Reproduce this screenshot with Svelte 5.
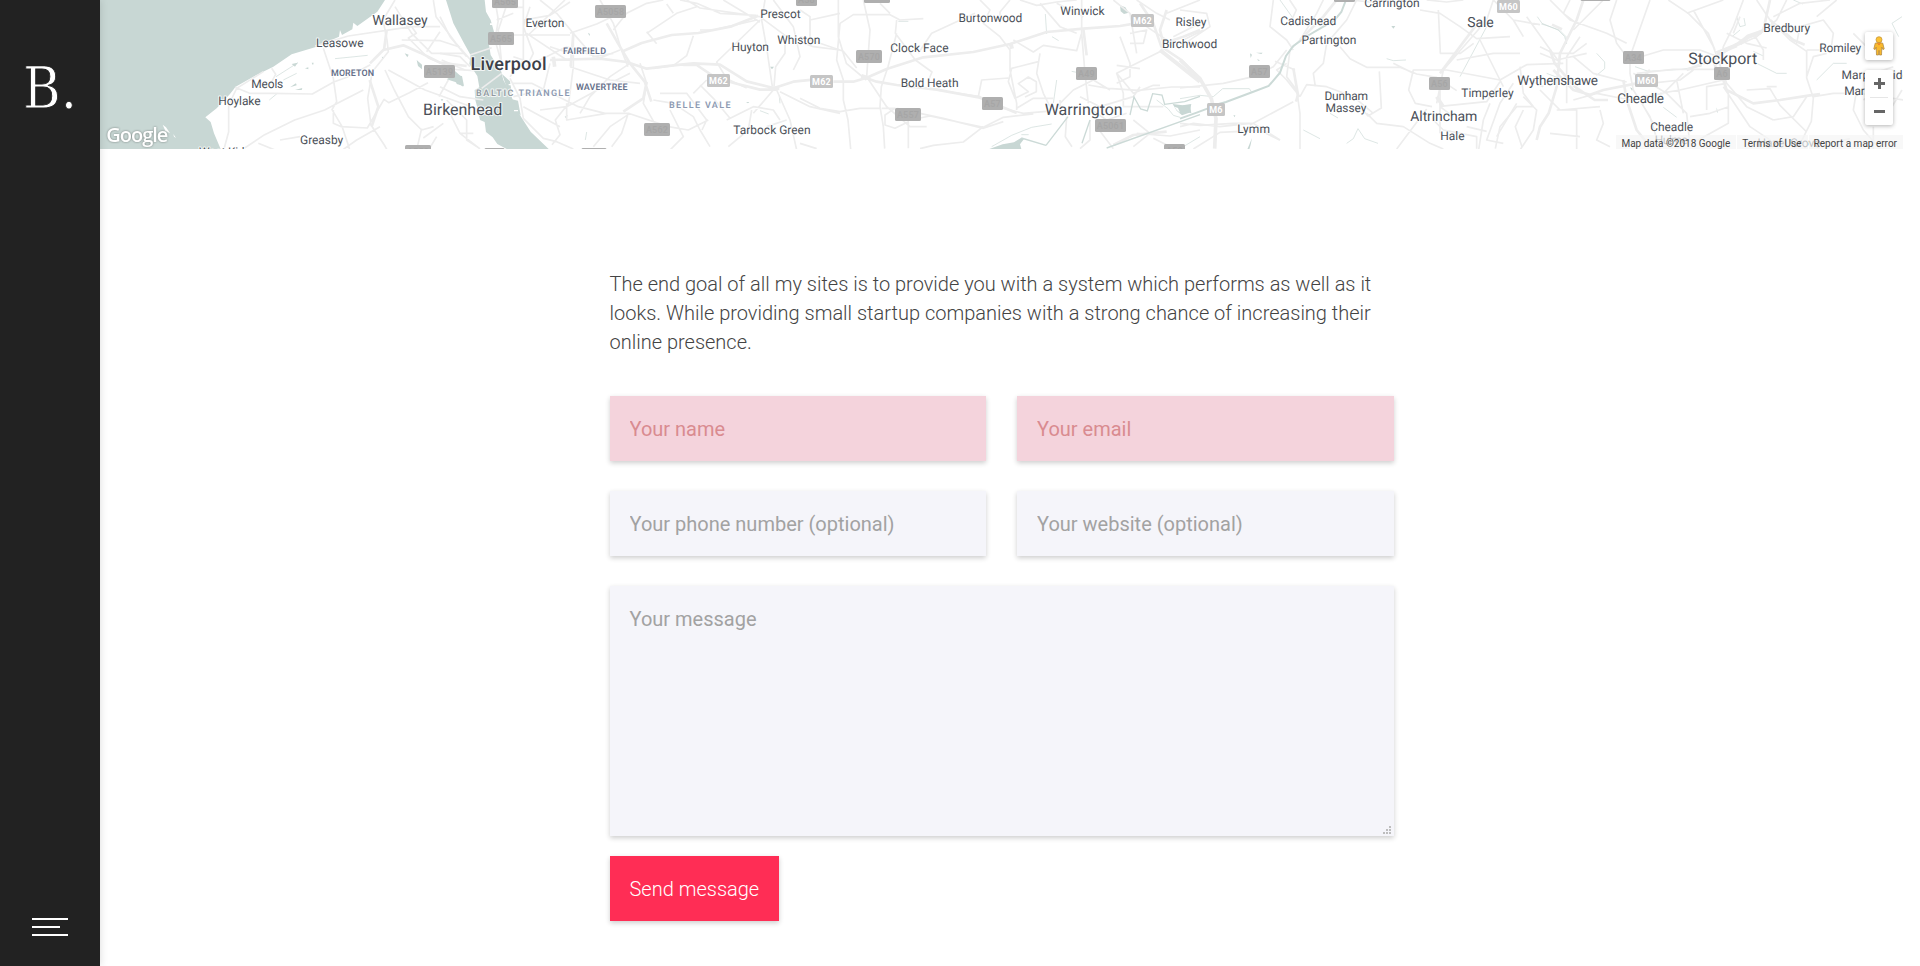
<script>
  // Road and water geometry is stored per map tile, at three units per pixel.
  const tiles = [
    {
      x: 0,
      water: [
        'M300 0H1155L1132 35 1072 78 1060 68 1057 88 1026 105 1020 90 1017 110 945 142 875 163 820 200 760 230 707 260 690 282 650 325 616 352 632 366 642 400 662 447H300Z',
        'M875 192l18-4-8 12zM915 205l10-3v6zM935 188l6 0-2 8zM870 262l18-12 2 6zM885 270l22-6-2 6zM1214 160l12 4-4 8zM1145 170l8 2-4 6zM1322 298l8 0-4 6zM1250 180l16 14 0 14-12-10z',
        'M1364 212l18 16 8 32-24-14-26-8 12-8z'
      ],
      land: ['M488 374l10 8 12 18-14-8zM520 402l8 12-6-4z'],
      thin: ['M1005 176l60-6 38-4M828 230l66-42M808 300l24-20M850 240l40-20'],
      roads: [
        [5, 'M1185 0l-36 60 12 60 4 35-48 60-14 80 10 80 40 60 40 72M945 138l100-30 190-28 85 0M970 145l30 90 10 70-14 24 30 50 20 60 14 50M815 205l12 18-16 30M705 262l44 18 68 0 120 2 64-36 40-14 70-38M1090 270l-66 34-50 26-90 30-90 44-60 40M790 215l-80 50-24 50 0 80-14 52M775 430l60 24M900 410l-60 10M1000 330l0 40 24 10 78 4 50-86 14 10 62-30 56-30M1165 210l110 60 110 40 55 20M1155 210l28 60 42 80 40 40 36-10M1235 80l14 20-24 14 60 60 80 34 60 4M1205 120l116 2 60 20M1185 20l50 80 60 60 100 0M1300 0l8 50 60 80 44 50M1140 380l-70 40-40 28M1265 385l-14 60M1330 370l-60 44M1310 410l-22 36M1345 240l-28 50M1320 95l-40 60'],
        [8, 'M1110 190l40-40 60-14 50 22 60 30 80 10M1160 90l-8 60M1115 380l20-60-26-80']
      ]
    },
    {
      x: 440,
      water: [
        'M18 0H134L138 35 152 60 162 95 146 128 152 165 184 215 190 240 208 272 226 320 244 352 272 395 326 447H200L172 432 158 412 138 396 134 366 120 360 114 330 106 300 104 270 118 262 112 228 88 192 92 166 72 130 40 70Z',
        'M44 226l22 2 6 30-22-6zM444 98l6 4-2 6zM374 350l10-4-6 8zM990 200l12 0-6 8zM918 306l10 0-4 4zM186 222l24 22 6 40-14-16zM210 296l24 6 8 44-10-8z'
      ],
      land: ['M142 36h14v5h-14zM150 50h14v4h-14zM150 70h10v5h-10zM206 252h10v4h-10zM222 330h12v4h-12z'],
      thin: ['M436 420l4-24M960 332l26 10M1018 290l2 20'],
      roads: [
        [5, 'M165 0l10 60-10 60 20 70M205 0l-30 90 10 100M250 0v180l-40 50M270 20l-20 60 30 80-20 40M160 22h90M170 60l50-20M300 0l50 40 50 60 0 100-14 110-40 50 14 44-24 30M250 60l80-14 60-40M375 0l-110 105M260 100l120 80M170 105l220 0M220 170l60 20 100-50 100 34 60-24M390 100l80-28 64-30M400 100l60 70 60-10M480 0l40 70 24 80 20 50M520 90l40-50 60-30 50-10M620 100l90-60 60-20M620 95l30 36M700 40l-20-28M720 0l50 10 70 30 110 6M740 0l40 24 180 26M850 0l60 36 50 30M975 0l-10 60 16 90 16 110M960 60l-130 126 30 50 60 28M1035 120l0 40-28 40-5 60M1000 0l60 80 20 90-20 40M1200 150l-80-10-80-30-80-60M1110 90l0-30 90-20M780 90l40 0 130-30M640 205l60-8 40-30 20-60M600 190l20 60-10 60 34 60M570 190l-60 40-60 60-30 50M390 200l120 40 90 10M330 140l60 20M330 190l-20 80-90 20M215 250l60 0 140 70 80 20 70 0 120 40 60 10 60-30M210 235l30 60 10 60 60 60 40 10 50 22M250 320l110 60M300 330l80-10 110-60 80-40M380 310l0 50 120-20M570 340l-60 40-50 60M565 340l-20 60-30 40M640 300l60 10 60 40 20 40 30 50M660 280l80 0 60 80-14 30M760 280l40-40M690 330l40 80-40 40M860 360l80-40 60 10 20 30M870 355l-50-60-40-40M935 330l-10 60-60 50M1000 270l-60 70M1010 270l40 90 20 90M1040 360l-60 20M1020 275l90 45 90 20M0 160l60 10 30 30M0 260l60 30 70 10M0 320l30 20 30 60 60 47M20 300l60 60 0 60 30 20M90 165l65-22M75 210l-70-30M60 400l40 0M125 265l60-45M0 50l30 60 50 60'],
        [8, 'M330 180l150-4 80 10 60 20 80-10 60-6 80 4 80 50 80 20M545 155l60-26 90-24 80-6 100-20 80-32M500 70l34 60 36 60 44 55 20 60M620 245l-10 50-60 40M730 195l40 0 60 40 60 16 70 18 50 0M1000 265l60-20 60-6M400 100l-8 100'],
        [11, 'M988 265h30M340 170l4 30']
      ]
    },
    {
      x: 800,
      water: [
        'M960 16l16 6 10 16-14 4-10-8zM568 447l40-14 34-6 22-14 8 4-12 16 4 14zM1118 312l30 4 26-4-6 26-22 8-16-14z'
      ],
      land: ['M1124 320l10 4 6 14-10-8z'],
      thin: ['M736 42l4 60M756 110l20 12M770 240l-10 70M815 214l20 4M575 440l60-34 60-24 60-10M664 404l22 0M1200 410l-60 36M325 64l-30 0M1070 300l34 26 16 20 20 6'],
      green: ['M990 345l12-54 20 36 20 6 16-52 28 4 8 28 60-8 46-16M664 414l74 22M738 436l66-86M920 444l280-100M870 360l-24 70'],
      roads: [
        [5, 'M115 0l0 110 24 80 60 50M120 70l40-26 110 0 30 16 70-4M120 70l-10 110 20 60 0 60 14 60 8 87M190 0l20 90-10 140 60 90 70 60 50 0M270 40l-30-30M290 60l-4 40 60 80 50 36-10 24M290 100l-26 100-20 60-4 60 10 60 4 66M525 40l-130 60-40 60M540 0l30 30-20 40 50 40 30 40 0 60 20 100 0 20M600 70l0-34 30-36M660 0l50 16 60-10 60-6M770 10l80 40M720 10l60 70 50 20M640 120l60 36 30-20 100 16 14-50M845 0l0 100 10 120 10 90M940 0l50 40 20 120M960 110l30 80 0 40-40 20M990 100l50-10-10 40-40 0M1040 80l60 40M1010 0l60 40 40 20M1100 40l100-40M1120 110l80-40M1090 150l-80 40-60 30 50 60 60-24 20 0M1020 206l-70-10M950 220l20 60 0 40 120 0M865 255l60 10 90 6 100-10 85 0M780 310l40-40 60-30 50 30M780 300l0 40M840 290l60 30 100-30 20-30M720 160l-10 60 20 60 20 40M715 185l-80 20-10 40 20 50 40-20-30-24 30-20 24 14 0 30-34 16M650 325l50-30 60 0M535 290l10-50 80-6M410 270l130 20 50 30 80 20 70-6M245 325l40 0-30 20 0 30 30 10 40-20 0 80M330 360l60-12 160 34 60-30 90-10M290 325l140 30 120 30 60-20M550 380l-60 46-90 10-40 10M0 295l60 30 60 10 60-10 60 0M0 430l50 16M0 110l60 20 70 24 40 50M0 30l30 20 0 70M800 350l-4 60 20 30M870 360l0 60-30 26M890 380l50 66M1000 360l50 40-50 40M1010 400l100 8 90-18M1060 415l60 30M860 320l60 40 60-20'],
        [8, 'M100 245l60 0 40-12 60-26 110-35 150-16 110-24 110-36 110-10 110-8 60-10M200 235l30 10 60 10 120 14 130 24 110 46M1020 10l40 60 24 70 60 40 60 60M1100 30l-20 60 10 40 60-20 50-20M940 435l60-30 100-10M850 86l10 80'],
        [12, 'M184 228l26 8M632 130l4 16M1080 150l120 95']
      ]
    },
    {
      x: 1180,
      water: [
        'M0 318l30-4 4 26-16-4zM210 160l6 4-4 10zM634 78l12 0-6 8zM160 346l6 0-2 6zM216 414l-14 34h6l4-14zM228 158l20 0-4 4zM232 176l8 6-6 0z'
      ],
      canal: [
        'M498 0l-14 36-22 26-32 18-48 28-42 30-22 30-18 50-34 40-48 18-80 30-30 8M108 316l-58 22-50 18'
      ],
      thin: ['M0 296l60-10 40 4 28-24 80 0 8 12M620 176l20 6 38-2M1072 50l14 20 48 20 20 20 6 22M840 230l80-150M300 0l40 56M370 390l50 26M500 430l20-14 14-30 20 30 40 14M450 340l24 14'],
      roads: [
        [5, 'M0 30l80 10 10 40-90 60M10 120l60-30M280 0l-10 80 50 40 20 30M335 60l14-30-20-30M430 0l-20 40-50 80-30 30-10 80 30 40 10 70 0 140M320 150l-40 50-60 30-90 20-130 14M285 184l60 26M320 190l-30 20 30 30 40 50M360 290l20-36 60 6 80 30 60 50M530 0l-30 60-60 70-10 60-30 30 6 40M480 140l30 36 50 26 100 0 50 20 60 10 60 40M540 320l24 28 40-24-6-110M560 340l30 30 80 10 80 50 40 17M650 447l90-120M775 30l6 130 60 0 40-30M720 30l60 10 60 40 50 36 100-6M940 0l-20 60-130 150-20 100M900 120l60 120 10 20M960 240l-160-30-100 0-14 60 20 40 50 10M960 245l-40 60-140 14M780 240l0 80 40 30M640 190l60 30M780 320l0 80M930 310l-20 50-14 90M960 240l80-46 110-4M1020 200l10 80 30 40M1030 230l60 30M1040 50l50 70 50 70M940 0l60 60 30 50M1000 60l80 14M1000 250l-40 60-40 110 50 10M1010 310l-60 100M1030 330l-24 50 20 60M0 370l60 6 100-6 60 0 80 50M0 380l40-10 80 10 90-10M210 375l130-70M40 447l80-50 120-6 60 30'],
        [5, 'M510 0l60 6 60-6M740 0l60 6 50-6M830 180l110-20 80 0M1060 320l-50 0-50 60-14 66M1030 290l40 40-10 60-40 60M860 380l60 14M760 360l30 30 100 20 0 36'],
        [8, 'M340 205l14 80-6 20M900 60l-120 160M360 120l70-70 40-50'],
        [11, 'M0 180l60 56 34 60 14 60-4 90M770 290l20 30']
      ]
    },
    {
      x: 1540,
      water: ['M270 262l10 4-4 6zM530 322l4 16-4-2z'],
      thin: ['M4 72l14 4 40 14 20 20 2 20M170 160l24 26 0 20-24 20M285 200l40 14 100-6 60-10M590 50l10 30 16-4-4-22M576 110l24-20M640 154l30 14M1086 50l-30 20 20 40M650 190l60 30 30 0M830 240l50-50 40 0M370 322l40 30M20 220l36 14M760 0l28 12'],
      roads: [
        [5, 'M30 0l60 60 110 40 60 30M230 0l-20 60 20 70 30 40M330 0l-60 170 0 50 10 50 50 80 30 97M90 0l-20 40 40 30M385 0l60 40 60 60 20 50M550 0l-110 40M610 0l-30 80-30 60-10 60M460 30l60 110 40 110 60 70 80 40M650 0l40 60 60 60 50 34 0 80 20 60-6 70-30 60M740 0l-30 60-60 50-110 50M700 50l80-40 90-10M800 150l40 0M770 130l10-50 70-20 30 40-6 40M830 50l60-50M560 100l60 30 60 14M270 180l100-30 110 0 80 30M280 220l100 60 60 60 10 100M290 220l110-12 130 0M430 220l-60 60-60 10M330 250l90-10 40-30M410 240l20 100M360 280l60-10 130-30M500 330l0-70 60-10M450 350l60-10 56-20M565 270l0 100-90 50-110 0M300 300l40 70 70 20M550 260l80 120 90 60M620 270l70-4 30 50 80 80M680 260l30 0M820 290l60-10 80 0 130 20M800 230l20-60 40-10M700 360l60-10 40-60M640 100l30 50 0 30M950 270l-10 60 30 60 50 57M1000 380l0 67M970 300l40-30M1050 330l36-60M870 430l60-14M940 100l60 60M1060 200l-60 20M600 50l-20 50M100 170l60 50 100 26M0 140l40 20 60 0 40-30M0 160l50 20 90-20M120 110l-40 60 0 70 0 70M0 270l60 60 120-10M50 330l60 0 0 117M30 400l90 10M180 330l10 40-20 50 40 20M100 300l70-20 100 20M190 0l-90 90'],
        [8, 'M130 0l-20 60-50 100-10 100-24 80-26 40-10 40M40 210l60 60 50 14 40-14 100-20 40-40M250 240l10 60 30 90 40 50M30 150l14 40 60 70 60 40 40 0M540 210l20 60 80 40 80-10 90-14 30-4M530 170l80-50 60-30 20-90M690 60l70 60 34 14M440 210l100-40M520 180l16 50'],
        [13, 'M600 130l24-20 40-14M530 160l60-24'],
        [8, 'M36 74l30 14']
      ]
    }
  ];

  const ink = '#4b5058';
  const suburb = '#66708a';
  // [text, x, baseline, width, size, weight, colour]
  const places = [
    ['Wallasey', 372.3, 25, 55.3, 14], ['Leasowe', 316, 47.3, 47.5, 12], ['Meols', 251.3, 88, 32, 12],
    ['Hoylake', 218.3, 105, 42.3, 12], ['MORETON', 331, 76, 43, 9, 600, suburb], ['Greasby', 300, 144, 43.3, 12],
    ['West Kirby', 199, 156, 55, 12], ['Birkenhead', 423, 115, 79.3, 16], ['Liverpool', 470.5, 70, 76, 18, 500, '#3c4048'],
    ['Everton', 525.5, 26.7, 39, 12], ['FAIRFIELD', 563, 54, 43, 9, 600, suburb], ['WAVERTREE', 576, 90, 51.7, 9, 600, suburb],
    ['BALTIC', 476, 96, 37.5, 9, 600, '#929aa2'], ['TRIANGLE', 518.5, 96, 51, 9, 600, '#8d9ab2'],
    ['BELLE VALE', 669, 108, 61.5, 9, 600, '#8d9ab2'], ['Prescot', 760.3, 18.3, 40.3, 12], ['Huyton', 731.5, 51, 37.5, 12],
    ['Whiston', 777.3, 44, 43, 12], ['Tarbock Green', 733.3, 134, 77.3, 12], ['Burtonwood', 958.5, 22.3, 63.8, 12],
    ['Winwick', 1060.3, 15.3, 44.3, 12], ['Clock Face', 890.3, 52, 58.3, 12], ['Bold Heath', 900.7, 87.3, 57.8, 12],
    ['Warrington', 1044.7, 114.6, 78, 16], ['Risley', 1175.5, 26.3, 31, 12], ['Birchwood', 1162, 48.3, 55.2, 12],
    ['Cadishead', 1280.3, 25.2, 56, 12], ['Partington', 1301.5, 44.2, 55, 12], ['Carrington', 1364.3, 7.2, 55.3, 12],
    ['Dunham', 1324.5, 100.2, 43.5, 12], ['Massey', 1325.5, 112.3, 41, 12], ['Lymm', 1237.3, 133.3, 32.7, 12],
    ['Sale', 1467.3, 27.3, 26.3, 14], ['Timperley', 1461.3, 96.5, 52.3, 12], ['Altrincham', 1410.3, 121.3, 67, 14],
    ['Hale', 1440.3, 140.3, 24.3, 12], ['Wythenshawe', 1517.3, 85.3, 80.7, 13.5], ['Stockport', 1688.3, 63.7, 68.9, 16],
    ['Cheadle', 1617.3, 103, 46.7, 13.5], ['Cheadle', 1650.3, 131.3, 42.8, 12], ['Hulme', 1654.7, 143.6, 33, 12],
    ['Bredbury', 1763.3, 31.5, 46.8, 12], ['Romiley', 1819.3, 52.3, 42, 12], ['Marple Bridge', 1841.5, 78.5, 74, 12],
    ['Marple', 1844.3, 95.3, 36, 12], ['Hazel Grove', 1757.5, 146.5, 63, 12]
  ];

  // [text, x, y, width]
  const shields = [
    ['A5139', 424, 65, 31], ['A565', 492, -5, 26], ['A5058', 595, 5, 31], ['A565', 488, 32, 26], ['A58', 796, -7, 21],
    ['A562', 644, 123, 26], ['A552', 405, 145, 26], ['A41', 484.5, 148, 20], ['A561', 581.5, 148, 25],
    ['A570', 864, -10, 26], ['A570', 856, 50, 26], ['A557', 895, 108, 26], ['A57', 982, 97, 21], ['A49', 1076, 67, 21],
    ['A5061', 1095, 119, 31], ['A50', 1164, 144, 21], ['A57', 1249, 65, 21], ['A57', 1334, -11, 21], ['A56', 1429, 77, 21],
    ['A5145', 1580.5, -12, 30], ['A34', 1623, 51, 21], ['A6', 1714, 67, 16],
    ['M62', 707, 74, 23], ['M62', 810, 75, 23], ['M62', 1131, 14, 23], ['M6', 1207, 103, 18], ['M60', 1497, 0, 23], ['M60', 1635, 74, 23]
  ];

  const fields = [
    { name: 'name', label: 'Your name', invalid: true },
    { name: 'email', label: 'Your email', invalid: true },
    { name: 'phone', label: 'Your phone number (optional)', invalid: false },
    { name: 'website', label: 'Your website (optional)', invalid: false }
  ];
</script>

<div class="page">
  <aside class="sidebar">
    <div class="logo">B.</div>
    <button class="menu" aria-label="Menu"><span></span><span class="short"></span><span></span></button>
  </aside>

  <main>
    <section class="map">
      <svg class="canvas" viewBox="100 0 1803 149" width="1803" height="149">
        {#each tiles as t}
          <g transform="translate({t.x} 0) scale(0.33333)">
            {#each t.water as d}<path class="water" {d} />{/each}
            {#each t.land ?? [] as d}<path class="land" {d} />{/each}
            {#each t.thin ?? [] as d}<path class="thin" {d} />{/each}
            {#each t.roads as [w, d]}<path class="road" {d} stroke-width={w} />{/each}
            {#each t.green ?? [] as d}<path class="stream" {d} />{/each}
            {#each t.canal ?? [] as d}<path class="stream canal" {d} />{/each}
          </g>
        {/each}
        {#each shields as [text, x, y, w]}
          <g class:motorway={text[0] === 'M'} class="shield">
            <rect {x} {y} width={w} height="13" rx="1.5" />
            <text x={x + w / 2} y={y + 9.6} text-anchor="middle">{text}</text>
          </g>
        {/each}
        {#each places as [text, x, y, w, size, weight, colour]}
          <text class="place" {x} {y} textLength={w} font-size={size} font-weight={weight ?? 400} fill={colour ?? ink}>{text}</text>
        {/each}
        <text class="google" x="106.3" y="141.8" textLength="62">Google</text>
      </svg>

      <div class="controls">
        <div class="control pegman">
          <svg width="12" height="20" viewBox="0 0 12 20">
            <path d="M2.2 7.2Q6 5.6 9.8 7.2L11.2 13 9.9 13.6 8.8 11.2 8.5 19H6.5L6 14.4 5.5 19H3.5L3.2 11.2 2.1 13.6.8 13Z" fill="#f9b92d" stroke="#a9823c" stroke-width=".7" />
            <circle cx="6" cy="3.7" r="3" fill="#fcc233" stroke="#c08f35" stroke-width=".7" />
            <path d="M3.7 6.8Q6 8 8.3 6.8L6 9.3Z" fill="#e8742c" />
          </svg>
        </div>
        <div class="control zoom">
          <svg width="28" height="27" viewBox="0 0 28 27"><path d="M9 13.5h11M14.5 8v11" stroke="#666" stroke-width="3" /></svg>
          <i></i>
          <svg width="28" height="27" viewBox="0 0 28 27"><path d="M9 13.5h11" stroke="#666" stroke-width="3" /></svg>
        </div>
      </div>

      <div class="credits">
        <span>Map data ©2018 Google</span><span>Terms of Use</span><span>Report a map error</span>
      </div>
    </section>

    <section class="contact">
      <p>The end goal of all my sites is to provide you with a system which performs as well as it looks. While providing small startup companies with a strong chance of increasing their online presence.</p>
      <form>
        <div class="grid">
          {#each fields as f}
            <input name={f.name} placeholder={f.label} class:invalid={f.invalid} />
          {/each}
        </div>
        <div class="message">
          <textarea name="message" placeholder="Your message"></textarea>
          <svg class="grip" width="8" height="8" viewBox="0 0 8 8" fill="#bdbdbd">
            <path d="M6 0h2v2H6zM3 3h2v2H3zM6 3h2v2H6zM0 6h2v2H0zM3 6h2v2H3zM6 6h2v2H6z" />
          </svg>
        </div>
        <button class="send" type="button">Send message</button>
      </form>
    </section>
  </main>
</div>

<style>
  :global(body) {
    margin: 0;
    background: #fff;
    overflow: hidden;
  }
  .page {
    display: flex;
    width: 1903px;
    height: 966px;
    font-family: Roboto, sans-serif;
  }
  .sidebar {
    flex: none;
    box-sizing: border-box;
    width: 100px;
    padding: 52px 0 30px;
    display: flex;
    flex-direction: column;
    justify-content: space-between;
    align-items: center;
    background: #222;
    box-shadow: 0 0 8px rgba(0, 0, 0, 0.15);
    z-index: 1;
  }
  .logo {
    font: 57px/72px 'DejaVu Serif Condensed', 'DejaVu Serif', serif;
    font-stretch: condensed;
    color: #fff;
    -webkit-text-stroke: 0.8px #222;
  }
  .menu {
    display: flex;
    flex-direction: column;
    gap: 6px;
    width: 36px;
    padding: 0;
    border: 0;
    background: none;
  }
  .menu span {
    height: 2px;
    background: #fff;
  }
  .menu .short {
    width: 28px;
  }
  main {
    width: 1803px;
  }
  .map {
    position: relative;
    height: 149px;
    overflow: hidden;
  }
  .canvas {
    display: block;
  }
  .water {
    fill: #c8d7d4;
  }
  .land {
    fill: #fff;
  }
  .thin,
  .stream {
    fill: none;
    stroke: #ccdad7;
    stroke-width: 2;
  }
  .stream {
    stroke-width: 4;
  }
  .canal {
    stroke-width: 6;
  }
  .road {
    fill: none;
    stroke: #ededed;
    stroke-linejoin: round;
  }
  .shield rect {
    fill: #afafaf;
  }
  .shield text {
    font: 500 9px Roboto, sans-serif;
    letter-spacing: 0.2px;
    fill: #a6a6a6;
  }
  .shield.motorway rect {
    fill: #c5c5c5;
  }
  .shield.motorway text {
    font-weight: 700;
    fill: #fff;
  }
  .place {
    font-family: Roboto, sans-serif;
    text-rendering: geometricPrecision;
    paint-order: stroke;
    stroke: rgba(255, 255, 255, 0.75);
    stroke-width: 2px;
    stroke-linejoin: round;
  }
  .google {
    font: 600 20px 'Open Sans', sans-serif;
    fill: #fff;
    filter: drop-shadow(0 0 1px rgba(0, 0, 0, 0.4));
  }
  .controls {
    position: absolute;
    top: 32px;
    right: 10px;
    display: flex;
    flex-direction: column;
    gap: 10px;
  }
  .control {
    width: 28px;
    background: #fff;
    border-radius: 2px;
    box-shadow: 0 1px 4px rgba(0, 0, 0, 0.3);
  }
  .pegman {
    height: 28px;
    display: grid;
    place-items: center;
  }
  .zoom {
    display: flex;
    flex-direction: column;
    height: 55px;
  }
  .zoom i {
    height: 1px;
    margin: 0 5px;
    background: #e6e6e6;
  }
  .credits {
    position: absolute;
    right: 0;
    bottom: 0;
    display: flex;
    gap: 1px;
    font-size: 10px;
    line-height: 14px;
    height: 14px;
    color: #444;
  }
  .credits span {
    box-sizing: border-box;
    height: 14px;
    padding: 2px 6px 0 5px;
    background: rgba(245, 245, 245, 0.7);
    white-space: nowrap;
  }
  .contact {
    width: 784px;
    margin: 0 auto;
    padding-top: 121px;
  }
  p {
    margin: 0 0 39px;
    font-size: 20px;
    font-weight: 300;
    line-height: 29px;
    color: #444;
  }
  .grid {
    display: grid;
    grid-template-columns: 1fr 1fr;
    gap: 30px 31px;
    margin-bottom: 30px;
  }
  input,
  textarea {
    box-sizing: border-box;
    display: block;
    width: 100%;
    height: 65px;
    padding: 20px;
    border: 0;
    border-radius: 0;
    background: #f5f5fa;
    box-shadow: 0 2px 5px rgba(0, 0, 0, 0.2);
    font: 400 20px/25px Roboto, sans-serif;
  }
  textarea {
    height: 250px;
    padding-top: 21px;
    resize: none;
  }
  input::placeholder,
  textarea::placeholder {
    color: #a2a2a2;
    opacity: 1;
  }
  .invalid {
    background: #f4d3dc;
  }
  input.invalid::placeholder {
    color: #d98b90;
  }
  .message {
    position: relative;
    margin-bottom: 20px;
  }
  .grip {
    position: absolute;
    right: 3px;
    bottom: 2px;
  }
  .send {
    display: block;
    height: 65px;
    padding: 0 20px;
    border: 0;
    background: #ff2d55;
    box-shadow: 0 2px 5px rgba(0, 0, 0, 0.2);
    color: #fff;
    font: 300 20px Roboto, sans-serif;
  }
</style>
